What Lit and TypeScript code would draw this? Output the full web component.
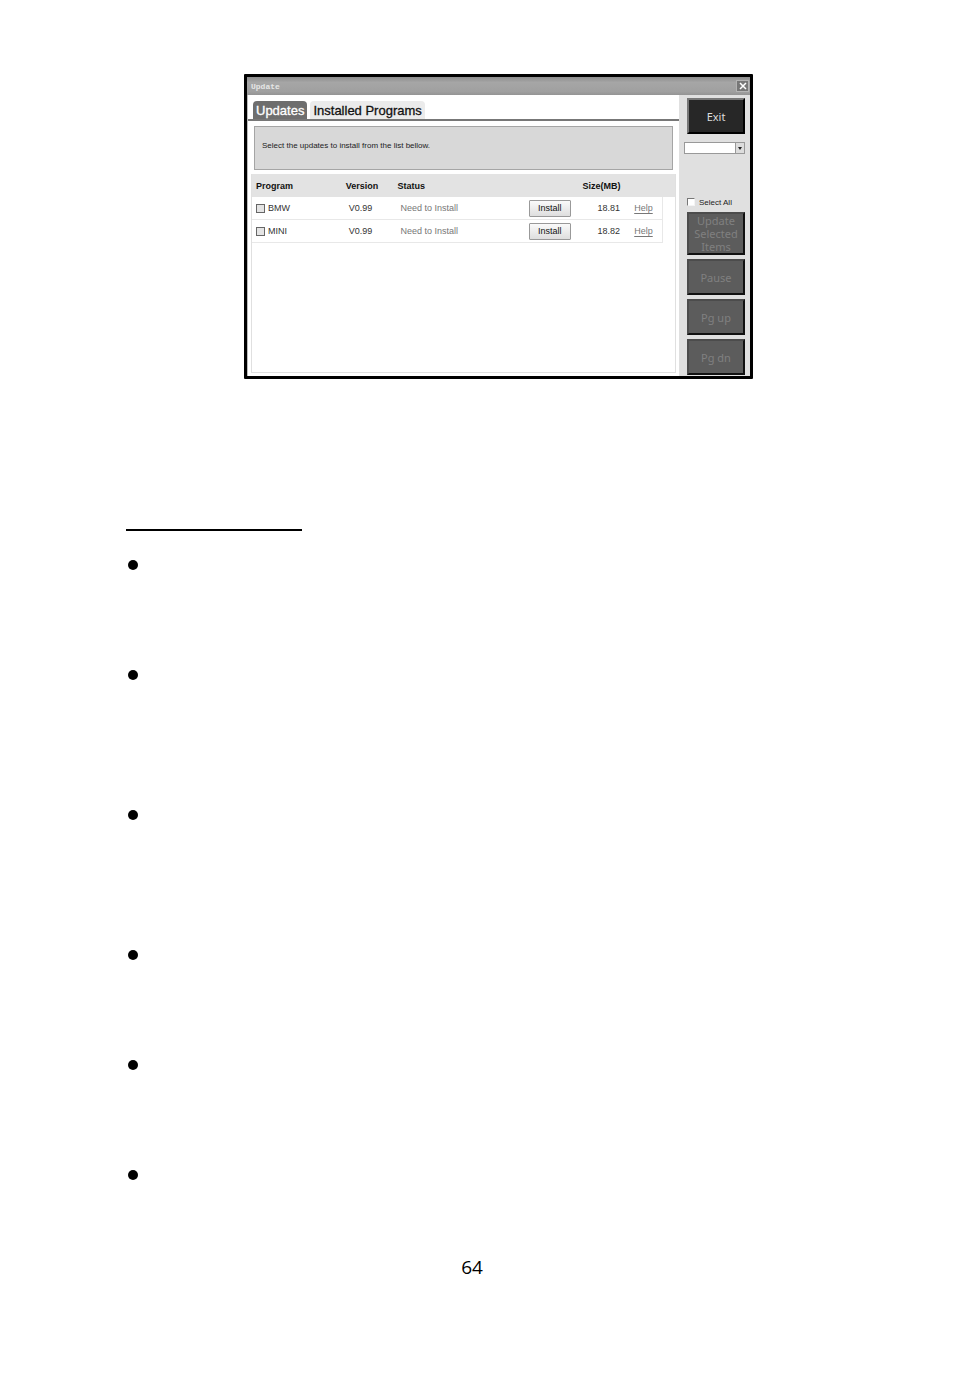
import { LitElement, html, css } from 'lit';
import { customElement, property } from 'lit/decorators.js';

interface Program {
  name: string;
  version: string;
  status: string;
  size: string;
}

const programs: Program[] = [
  { name: 'BMW', version: 'V0.99', status: 'Need to Install', size: '18.81' },
  { name: 'MINI', version: 'V0.99', status: 'Need to Install', size: '18.82' },
];

@customElement('side-button')
export class SideButton extends LitElement {
  static styles = css`
    :host {
      display: block;
    }

    .button {
      display: block;
      box-sizing: border-box;
      width: 100%;
      min-height: 36px;
      margin: 0;
      padding: 0 4px;
      border: 2px solid;
      border-color: #777 #000 #000 #777;
      background: #272727;
      color: #ddd;
      font-family: 'Noto Sans', 'Liberation Sans', sans-serif;
      font-size: 11px;
      line-height: 13px;
      text-align: center;
    }

    .button:disabled {
      border-color: #4c4c4c #111 #111 #4c4c4c;
      background: #5c5c5c;
      color: #808080;
    }
  `;

  @property({ type: String })
  label = '';

  @property({ type: Boolean })
  disabled = false;

  render() {
    return html`
      <button class="button" type="button" ?disabled=${this.disabled}>${this.label}</button>
    `;
  }
}

@customElement('program-table')
export class ProgramTable extends LitElement {
  static styles = css`
    :host {
      display: block;
    }

    .table {
      width: 100%;
      border-collapse: separate;
      border-spacing: 0;
      table-layout: fixed;
      color: #333;
      font-size: 9px;
      line-height: 12px;
    }

    th,
    td {
      height: 22px;
      padding: 0;
      text-align: left;
      vertical-align: middle;
    }

    th {
      height: 23px;
      background: #e3e3e3;
      color: #111;
    }

    td {
      border-bottom: 1px solid #e8e8e8;
    }

    .program {
      width: 21%;
      padding-left: 4px;
    }

    .version {
      width: 12%;
      padding-left: 1px;
    }

    .status {
      width: 31%;
      padding-left: 1px;
    }

    .action {
      width: 12%;
    }

    .size {
      width: 12%;
      padding-left: 3px;
    }

    .last {
      padding-left: 1px;
      border-right: 1px solid #e8e8e8;
    }

    .edge {
      width: 12px;
    }

    td.edge {
      border: 0;
    }

    td.version,
    td.status {
      padding-left: 4px;
    }

    td.status {
      color: #777;
    }

    td.size {
      padding-left: 18px;
    }

    .name {
      display: flex;
      align-items: center;
      gap: 3px;
    }

    .check {
      appearance: none;
      box-sizing: border-box;
      width: 9px;
      height: 9px;
      margin: 0;
      border: 1px solid #666;
      background: #e4e4e4;
    }

    .check:checked {
      background: #555;
    }

    .install {
      display: block;
      box-sizing: border-box;
      width: 42px;
      height: 17px;
      padding: 0;
      border: 1px solid #999;
      border-radius: 1px;
      background: linear-gradient(#fafafa, #dedede);
      color: #111;
      font: inherit;
    }

    .help {
      color: #777;
      text-underline-offset: 2px;
    }
  `;

  @property({ attribute: false })
  rows: Program[] = [];

  render() {
    return html`
      <table class="table">
        <thead>
          <tr>
            <th class="program">Program</th>
            <th class="version">Version</th>
            <th class="status">Status</th>
            <th class="action"></th>
            <th class="size">Size(MB)</th>
            <th></th>
            <th class="edge"></th>
          </tr>
        </thead>
        <tbody>
          ${this.rows.map(
            (row) => html`
              <tr>
                <td class="program">
                  <label class="name"><input class="check" type="checkbox" />${row.name}</label>
                </td>
                <td class="version">${row.version}</td>
                <td class="status">${row.status}</td>
                <td class="action"><button class="install" type="button">Install</button></td>
                <td class="size">${row.size}</td>
                <td class="last"><a class="help" href="#help">Help</a></td>
                <td class="edge"></td>
              </tr>
            `
          )}
        </tbody>
      </table>
    `;
  }
}

@customElement('update-window')
export class UpdateWindow extends LitElement {
  static styles = css`
    :host {
      display: block;
      border: 3px solid #000;
      border-radius: 1px;
      background: #e0e0e0;
      font-family: 'Liberation Sans', Arial, sans-serif;
    }

    .titlebar {
      display: flex;
      align-items: center;
      justify-content: space-between;
      height: 18px;
      padding: 0 1px 0 4px;
      background: linear-gradient(#8c8c8c, #a6a6a6 30%, #a0a0a0 80%, #949494);
    }

    .title {
      color: #e6e6e6;
      font-family: 'Liberation Mono', monospace;
      font-size: 8px;
      font-weight: bold;
    }

    .close {
      display: flex;
      align-items: center;
      justify-content: center;
      width: 13px;
      height: 12px;
      padding: 0;
      border: 1px solid #b4b4b4;
      box-sizing: border-box;
      background: #777;
    }

    .body {
      display: flex;
    }

    .main {
      display: flex;
      flex: 1;
      flex-direction: column;
      min-width: 0;
      padding-top: 6px;
      border-left: 1px solid #bbb;
      box-sizing: border-box;
      background: #fff;
    }

    .tabs {
      display: flex;
      gap: 3px;
      padding-left: 5px;
      border-bottom: 2px solid #777;
    }

    .tab {
      height: 18px;
      margin: 0;
      padding: 0 3px;
      border: 0;
      border-radius: 4px 4px 0 0;
      background: #ebebeb;
      color: #111;
      font-family: inherit;
      font-size: 13px;
      line-height: 20px;
      -webkit-text-stroke: 0.3px;
    }

    .tab.active {
      background: #6e6e6e;
      color: #fff;
    }

    .message {
      box-sizing: border-box;
      height: 44px;
      margin: 5px 6px 4px;
      padding: 12px 7px;
      border: 1px solid #a5a5a5;
      background: #d8d8d8;
      color: #222;
      font-size: 8px;
      line-height: 13px;
    }

    .list {
      flex: 1;
      margin: 0 3px 3px;
      border: 1px solid #e0e0e0;
      border-top: 0;
    }

    .sidebar {
      display: flex;
      flex-direction: column;
      box-sizing: border-box;
      width: 71px;
      padding: 3px 5px 1px 8px;
    }

    .select {
      appearance: none;
      display: block;
      width: 100%;
      height: 12px;
      border: 1px solid #999;
      border-radius: 0;
      background: #fff;
      color: #222;
      font-size: 8px;
    }

    .picker {
      position: relative;
      margin: 8px 0 43px -3px;
    }

    .arrow {
      position: absolute;
      top: 1px;
      right: 1px;
      width: 9px;
      height: 10px;
      background: #ddd;
      pointer-events: none;
    }

    .all {
      display: flex;
      align-items: center;
      gap: 4px;
      height: 10px;
      margin-bottom: 5px;
      color: #222;
      font-size: 8px;
      white-space: nowrap;
    }

    .check {
      appearance: none;
      box-sizing: border-box;
      width: 8px;
      height: 8px;
      margin: 0;
      border: 1px solid;
      border-color: #777 #f4f4f4 #f4f4f4 #777;
      background: #fff;
    }

    .check:checked {
      background: #555;
    }

    .actions {
      display: flex;
      flex-direction: column;
      gap: 4px;
    }
  `;

  render() {
    return html`
      <div class="titlebar">
        <span class="title">Update</span>
        <button class="close" type="button" aria-label="Close">
          <svg viewBox="0 0 8 8" width="8" height="8">
            <path d="M1 1l6 6M7 1l-6 6" stroke="#fff" stroke-width="1.5" />
          </svg>
        </button>
      </div>
      <div class="body">
        <div class="main">
          <div class="tabs" role="tablist">
            <button class="tab active" type="button" role="tab" aria-selected="true">Updates</button>
            <button class="tab" type="button" role="tab" aria-selected="false">Installed Programs</button>
          </div>
          <div class="message">Select the updates to install from the list bellow.</div>
          <div class="list">
            <program-table .rows=${programs}></program-table>
          </div>
        </div>
        <div class="sidebar">
          <side-button label="Exit"></side-button>
          <div class="picker">
            <select class="select" aria-label="Filter">
              <option></option>
            </select>
            <svg class="arrow" viewBox="0 0 9 10">
              <path d="M0.5 0V10" stroke="#999" />
              <path d="M3 4h4l-2 3z" fill="#222" />
            </svg>
          </div>
          <label class="all"><input class="check" type="checkbox" />Select All</label>
          <div class="actions">
            <side-button label="Update Selected Items" disabled></side-button>
            <side-button label="Pause" disabled></side-button>
            <side-button label="Pg up" disabled></side-button>
            <side-button label="Pg dn" disabled></side-button>
          </div>
        </div>
      </div>
    `;
  }
}

@customElement('app-root')
export class AppRoot extends LitElement {
  static styles = css`
    :host {
      display: block;
      box-sizing: border-box;
      min-height: 100vh;
      padding: 74px 126px 94px;
      background: #fff;
      color: #000;
    }

    .figure {
      margin: 0 75px 150px 118px;
    }

    .rule {
      width: 25%;
      height: 2px;
      margin: 0 0 29px;
      border: 0;
      background: #000;
    }

    .notes {
      margin: 0;
      padding: 0 0 0 2px;
      list-style: none;
    }

    .note {
      min-height: 110px;
    }

    .note.long {
      min-height: 140px;
    }

    .note:last-child {
      min-height: 85px;
    }

    .note::before {
      content: '';
      display: block;
      width: 10px;
      height: 10px;
      border-radius: 50%;
      background: #000;
    }

    .page {
      margin: 0;
      padding-right: 10px;
      font-family: 'Open Sans', 'Noto Sans', sans-serif;
      font-size: 19px;
      line-height: 24px;
      text-align: center;
    }
  `;

  render() {
    return html`
      <update-window class="figure"></update-window>
      <hr class="rule" />
      <ul class="notes">
        <li class="note"></li>
        <li class="note long"></li>
        <li class="note long"></li>
        <li class="note"></li>
        <li class="note"></li>
        <li class="note"></li>
      </ul>
      <p class="page">64</p>
    `;
  }
}

declare global {
  interface HTMLElementTagNameMap {
    'app-root': AppRoot;
    'update-window': UpdateWindow;
    'program-table': ProgramTable;
    'side-button': SideButton;
  }
}
